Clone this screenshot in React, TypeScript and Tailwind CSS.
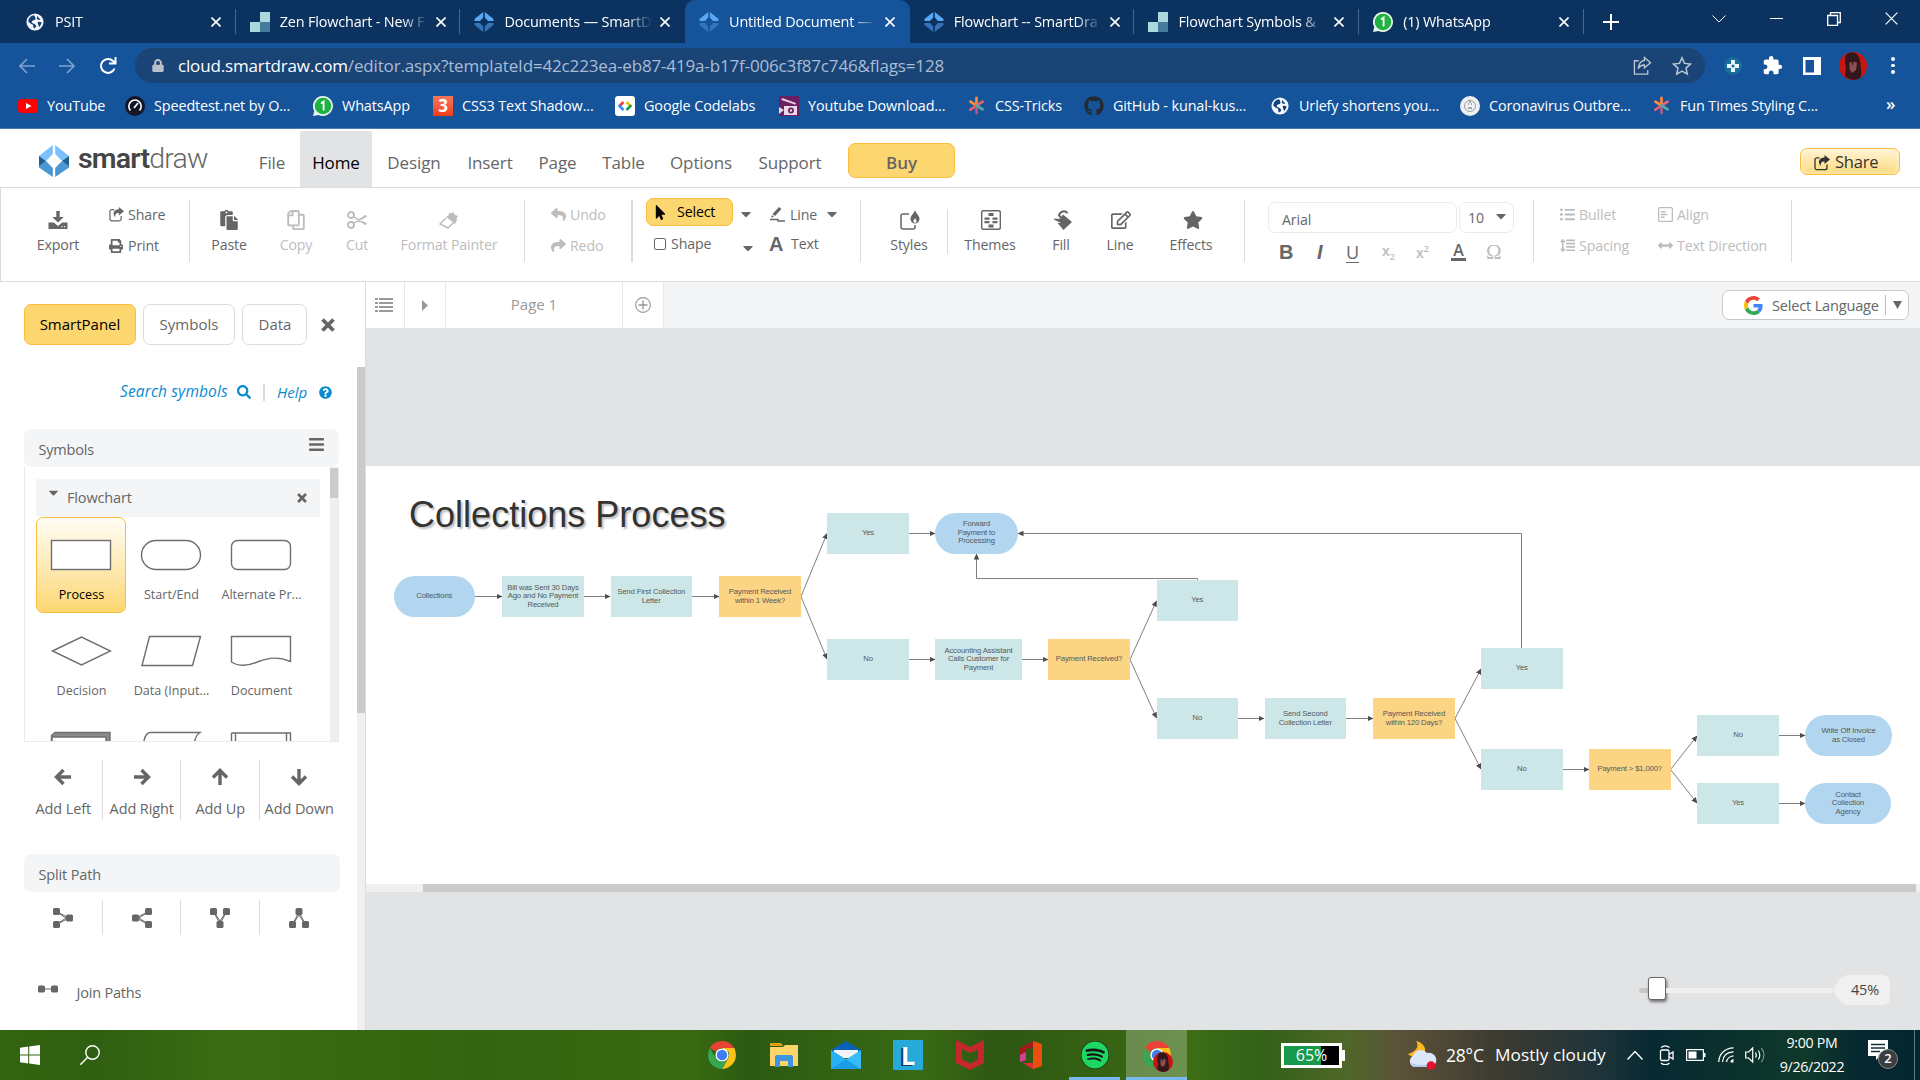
import type { ReactNode } from 'react';
import {
  FaBars, FaCaretDown, FaCut, FaGithub, FaLock, FaPaste, FaPrint, FaQuestionCircle, FaRegCopy,
  FaRegEdit, FaReply, FaSearch, FaShare, FaSpotify, FaStar, FaListUl, FaArrowsAltH, FaMousePointer,
} from 'react-icons/fa';
import { MdExtension } from 'react-icons/md';

/* ---------- favicons ---------- */

const Globe = ({ className = 'size-[18px]' }: { className?: string }) => (
  <svg viewBox="0 0 20 20" className={className}>
    <circle cx="10" cy="10" r="9.5" fill="#f5f7fa" />
    <path d="M9 2.5C5 3 2.6 6 2.6 9.6l3.2 2.600c1.700.4 2.400 1 2.200 2.400l.6 2.500c2-.4 3-1.600 2.600-3.200-1-1.700-3.600-2.200-4.800-3.400 0-1.700 1.200-2.400 3.400-2.600 1.600-1.400.6-3.200-.8-5.400zM12.500 3l-.4 3.400c1 1.400 2.600 1.200 3.900 1.400M13 10.200c1.200-.7 3-.5 4.300.2-.2 2-1.200 3.800-2.700 5.100-.5-1.700-1.400-3-1.600-5.300z" fill="#12427c" />
  </svg>
);
const Zen = () => (
  <svg viewBox="0 0 20 20" className="size-5">
    <path d="M10 0h10v10H10z" fill="#a9d8dd" /><path d="M0 10h10v10H0z" fill="#a9d8dd" /><path d="M10 10h10v10H10z" fill="#457b9d" />
  </svg>
);
const Gem = () => (
  <svg viewBox="0 0 20 20" className="size-5">
    <path d="M9.200 0v5.500L6 9H.5V7zM10.800 0v5.500L14 9h5.500V7z" fill="#58a8f5" />
    <path d="M9.200 20v-5.500L6 11H.5v2zM10.800 20v-5.500L14 11h5.500v2z" fill="#3573b8" />
  </svg>
);
const WhatsApp = () => (
  <svg viewBox="0 0 20 20" className="size-5">
    <path d="M10 0a10 10 0 1 1-4.600 18.900L0 20l1.300-5A10 10 0 0 1 10 0z" fill="#e8f6ec" />
    <circle cx="10" cy="10" r="8.300" fill="#1fb141" />
    <path d="M8 7.400 10.600 5.500v9" fill="none" stroke="#fff" strokeWidth="1.800" />
  </svg>
);
const Asterisk = () => (
  <svg viewBox="0 0 20 20" className="size-[19px]" strokeWidth="2.800" strokeLinecap="round">
    <path d="M10 10V2M10 10 3.500 6" stroke="#ff8a3c" /><path d="m10 10 6.500-4M10 10l-6.500 4.500" stroke="#f0616d" />
    <path d="M10 10v8" stroke="#b45a8c" /><path d="m10 10 6.500 4" stroke="#5aa7a0" />
  </svg>
);
const YouTube = () => (
  <svg viewBox="0 0 20 20" className="size-5"><rect y="3" width="20" height="14" rx="3.500" fill="#f00" /><path d="m8 7 5.500 3L8 13z" fill="#fff" /></svg>
);
const Speedtest = () => (
  <svg viewBox="0 0 20 20" className="size-5">
    <circle cx="10" cy="10" r="10" fill="#141526" />
    <path d="M5.500 14.500a6.200 6.200 0 1 1 9 0" fill="none" stroke="#fff" strokeWidth="1.600" /><path d="m9 12 4-5" stroke="#fff" strokeWidth="1.800" />
  </svg>
);
const Css3 = () => (
  <span className="flex size-5 items-center justify-center bg-gradient-to-b from-[#f4775c] to-[#f23a12] text-[17px] leading-none font-bold text-white">3</span>
);
const Codelabs = () => (
  <svg viewBox="0 0 20 20" className="size-5">
    <rect width="20" height="20" rx="3" fill="#fff" />
    <g fill="none" strokeWidth="2.600"><path d="M8.500 6 4.500 10" stroke="#ea4335" /><path d="m3.600 9.100 4.900 4.900" stroke="#4285f4" /><path d="m11.500 6 4 4" stroke="#fbbc04" /><path d="m16.400 9.100-4.900 4.900" stroke="#0f9d58" /></g>
  </svg>
);
const Downloader = () => (
  <svg viewBox="0 0 20 20" className="size-5">
    <path d="M0 0h20v20H0z" fill="#6b1f63" /><path d="m3 2 14 5-.6 1.800L2.400 4z" fill="#e3cfe2" /><path d="M5 10h13v9H5z" fill="#ead9e9" /><path d="M0 11l5 3-5 4z" fill="#ead9e9" /><circle cx="12" cy="14.500" r="3" fill="#6b1f63" /><circle cx="12" cy="14.500" r="1.200" fill="#ead9e9" />
  </svg>
);
const Corona = () => (
  <svg viewBox="0 0 20 20" className="size-5"><circle cx="10" cy="10" r="10" fill="#eef0f2" /><circle cx="10" cy="10" r="5.500" fill="none" stroke="#9a9fa5" /><path d="M8 8h1M11 8h1M8 12h4M10 5v2" stroke="#8a8f96" strokeWidth="1.300" /></svg>
);
const Avatar = ({ className }: { className: string }) => (
  <svg viewBox="0 0 28 28" className={className}>
    <circle cx="14" cy="14" r="14" fill="#c9150f" />
    <path d="M8 2c5-3 10-1 12 3 2 4 1 8 2 12 0 3 1 6-1 9-5 3-11 2-15-2 0-3 1-5 1-8C6 11 5 6 8 2z" fill="#33171c" />
    <path d="M10 11c2-2 6-2 8 0l-1 7-4 3-3-4z" fill="#8a4f50" /><path d="m12 8 1.500 6L15 8zM8 12l2.500 7V10z" fill="#33171c" />
  </svg>
);

/* ---------- browser chrome ---------- */

const tabs = [
  { icon: <Globe />, title: 'PSIT' },
  { icon: <Zen />, title: 'Zen Flowchart - New F' },
  { icon: <Gem />, title: 'Documents — SmartD' },
  { icon: <Gem />, title: 'Untitled Document —', active: true },
  { icon: <Gem />, title: 'Flowchart -- SmartDra' },
  { icon: <Zen />, title: 'Flowchart Symbols &' },
  { icon: <WhatsApp />, title: '(1) WhatsApp' },
];

const Cross = ({ className }: { className: string }) => (
  <svg viewBox="0 0 10 10" className={className} stroke="currentColor"><path d="m.5.5 9 9M9.500.5l-9 9" /></svg>
);

function TabStrip() {
  return (
    <div className="flex h-[43px] bg-[#0c335f] pl-[11px] text-white">
      {tabs.map((t, i) => (
        <div
          key={i}
          className={
            t.active
              ? 'relative flex w-[224.700px] items-center rounded-t-[10px] bg-[#15539a] pl-[14px]'
              : 'relative flex w-[224.700px] items-center pl-[14px]'
          }
        >
          <span className="flex w-5 shrink-0 justify-center">{t.icon}</span>
          <span className="ml-[10px] w-[151px] text-[14.4px] tracking-[-0.15px] whitespace-nowrap [mask-image:linear-gradient(90deg,#000_122px,transparent_148px)]">
            {t.title}
          </span>
          <Cross className="ml-[5px] size-[10px] stroke-[1.6]" />
          {i !== 2 && i !== 3 && <span className="absolute right-0 h-[25px] w-px bg-[#48678b]" />}
        </div>
      ))}
      <div className="flex flex-1 items-center">
        <svg viewBox="0 0 16 16" className="ml-[19px] size-4 stroke-white stroke-2"><path d="M8 0v16M0 8h16" /></svg>
        <svg viewBox="0 0 14 8" className="mb-[6px] ml-[93px] h-2 w-[14px] fill-none stroke-white"><path d="m.5.5 6.500 6.500L13.500.5" /></svg>
        <span className="mb-[6px] ml-[44px] h-px w-[13px] bg-white" />
        <svg viewBox="0 0 14 14" className="mb-[6px] ml-[44px] size-[14px] fill-none stroke-white stroke-[1.3]"><path d="M.7 3.500h9.800v9.800H.7zM3.500 3.500V.7h9.800v9.800h-2.800" /></svg>
        <Cross className="mb-[6px] ml-[44px] size-[13px] stroke-[0.9]" />
      </div>
    </div>
  );
}

function AddressBar() {
  return (
    <div className="flex h-[45px] items-center text-white">
      <svg viewBox="0 0 16 16" className="ml-[19px] size-4 fill-none stroke-[#7fa2cc] stroke-[1.6]"><path d="M16 8H1M8 1 1 8l7 7" /></svg>
      <svg viewBox="0 0 16 16" className="ml-6 size-4 fill-none stroke-[#7fa2cc] stroke-[1.6]"><path d="M0 8h15M8 1l7 7-7 7" /></svg>
      <svg viewBox="0 0 18 18" className="ml-6 size-[18px] fill-none stroke-white stroke-2"><path d="M15.500 11.500A7 7 0 1 1 14 4l2 2M16.500 0v6.500H10" /></svg>
      <div className="ml-[18px] flex h-[35px] w-[1570px] items-center rounded-full bg-[#1a4475]">
        <FaLock className="ml-[15px] h-[13px] text-[#b9c0c9]" />
        <span className="ml-[12px] w-[1437px] text-[17px] tracking-[-0.155px] whitespace-nowrap text-[#a9bdd6]">
          <span className="text-white">cloud.smartdraw.com</span>/editor.aspx?templateId=42c223ea-eb87-419a-b17f-006c3f87c746&amp;flags=128
        </span>
        <svg viewBox="0 0 20 20" className="ml-[18px] size-[19px] fill-none stroke-[#bcc7d4] stroke-[1.4]"><path d="M6 5H1.500v14h14v-4M12 1.500l6.500 5.500-6.500 5.500V9.500c-3 0-5 1-6.500 4C6 8.500 8 5 12 4.700z" /></svg>
        <svg viewBox="0 0 20 20" className="ml-[20px] size-5 fill-none stroke-[#bcc7d4] stroke-[1.5]"><path d="m10 1.800 2.500 5.600 6 .6-4.500 4.100 1.300 6L10 15l-5.300 3.100 1.300-6L1.500 8l6-.6z" /></svg>
      </div>
      <svg viewBox="0 0 18 18" className="ml-[19px] size-[18px]"><circle cx="9" cy="9" r="9" fill="#186f97" /><path d="M7 3h4v4h4v4h-4v4H7v-4H3V7h4z" fill="#e7f6fb" /><circle cx="9" cy="9" r="1.500" fill="#186f97" /></svg>
      <MdExtension className="ml-[20px] size-[21px]" />
      <svg viewBox="0 0 18 18" className="ml-[20px] size-[18px]"><path d="M0 0h18v18H0zM2.500 3v12.500H11V3z" fill="#fff" fillRule="evenodd" /></svg>
      <Avatar className="ml-[18px] size-7" />
      <span className="ml-6 flex flex-col gap-[3px]">
        <i className="size-[3.500px] rounded-full bg-white" /><i className="size-[3.500px] rounded-full bg-white" /><i className="size-[3.500px] rounded-full bg-white" />
      </span>
    </div>
  );
}

const bookmarks: { icon: ReactNode; label: string; w: string }[] = [
  { icon: <YouTube />, label: 'YouTube', w: 'w-[107px]' },
  { icon: <Speedtest />, label: 'Speedtest.net by O...', w: 'w-[188px]' },
  { icon: <WhatsApp />, label: 'WhatsApp', w: 'w-[120px]' },
  { icon: <Css3 />, label: 'CSS3 Text Shadow...', w: 'w-[182px]' },
  { icon: <Codelabs />, label: 'Google Codelabs', w: 'w-[164px]' },
  { icon: <Downloader />, label: 'Youtube Download...', w: 'w-[187px]' },
  { icon: <Asterisk />, label: 'CSS-Tricks', w: 'w-[118px]' },
  { icon: <FaGithub className="size-5 text-[#24292f]" />, label: 'GitHub - kunal-kus...', w: 'w-[186px]' },
  { icon: <Globe />, label: 'Urlefy shortens you...', w: 'w-[190px]' },
  { icon: <Corona />, label: 'Coronavirus Outbre...', w: 'w-[191px]' },
  { icon: <Asterisk />, label: 'Fun Times Styling C...', w: 'w-[235px]' },
];

function Bookmarks() {
  return (
    <div className="flex h-[41px] items-center border-b border-[#4a7db8] pb-[4px] pl-[18px] text-white">
      {bookmarks.map((b) => (
        <div key={b.label} className={`flex shrink-0 items-center ${b.w}`}>
          <span className="flex w-5 justify-center">{b.icon}</span>
          <span className="ml-[9px] text-[14.4px] tracking-[-0.12px] whitespace-nowrap">{b.label}</span>
        </div>
      ))}
      <span className="pb-1 text-[17px] font-semibold">»</span>
    </div>
  );
}

/* ---------- application header ---------- */

function Logo() {
  return (
    <div className="flex w-[206px] items-center">
      <svg viewBox="0 0 30 32" className="mt-[5px] ml-[1px] h-8 w-[30px] shrink-0">
        <path d="M13.800 0v9L7 16 0 11z" fill="#7cc1fb" /><path d="M16.200 0v9l6.800 7 7-5z" fill="#7cc1fb" />
        <path d="M0 11v11l7-6z" fill="#1b6290" /><path d="M30 11v11l-7-6z" fill="#1b6290" />
        <path d="M0 21v1.500L13.800 32v-9L7 16z" fill="#4a97d2" /><path d="M30 21v1.500L16.200 32v-9l6.800-7z" fill="#4a97d2" />
      </svg>
      <span className="mt-[2px] ml-[9px] font-['Roboto'] text-[28.5px] leading-none tracking-[-0.8px] text-[#454545]">
        <b className="font-semibold">smart</b><span className="font-light text-[#666]">draw</span>
      </span>
    </div>
  );
}

const menu = [
  { label: 'File', w: 'w-[56px]' }, { label: 'Home', w: 'w-[72px]' }, { label: 'Design', w: 'w-[84px]' },
  { label: 'Insert', w: 'w-[68px]' }, { label: 'Page', w: 'w-[67px]' }, { label: 'Table', w: 'w-[65px]' },
  { label: 'Options', w: 'w-[90px]' }, { label: 'Support', w: 'w-[88px]' },
];

const ShareIcon = ({ className }: { className: string }) => (
  <svg viewBox="0 0 16 16" className={className}>
    <path d="M13 9.500v3.200a2 2 0 0 1-2 2H3a2 2 0 0 1-2-2V4.800a2 2 0 0 1 2-2h2.500" fill="none" stroke="currentColor" strokeWidth="1.300" />
    <path d="M10.500 0 16 4.500 10.500 9V6.500C7 6.500 6.500 8 6.800 11 3.500 7.500 4.500 2.800 10.500 2.500z" fill="currentColor" />
  </svg>
);

function MenuBar() {
  return (
    <div className="flex h-[58px] border-b border-[#dcdcdd] bg-white pl-[38px] text-[17px] text-[#666]">
      <Logo />
      <div className="flex items-end pt-px">
        {menu.map((m) => (
          <div
            key={m.label}
            className={`flex h-14 items-center justify-center tracking-[-0.1px] ${m.w} ${m.label === 'Home' ? 'bg-[#e2e3e5] text-black' : ''}`}
          >
            <span className="pt-[7px]">{m.label}</span>
          </div>
        ))}
      </div>
      <div className="mt-[13px] ml-[14px] flex h-[35px] w-[107px] items-center justify-center rounded-[7px] border border-[#fdbc3c] bg-[#fcd66e] pt-1 text-[17px] font-semibold">Buy</div>
      <div className="mt-[18px] mr-5 ml-auto flex h-[27px] w-[100px] items-center rounded-[7px] border border-[#fdbc3c] bg-gradient-to-b from-[#fff3d4] to-[#fcda7c] pt-[2px] pl-[13px] text-[#333] shadow-[inset_0_0_4px_#fff8e0]">
        <ShareIcon className="mr-[5px] size-4" />
        <span className="text-[16.5px] tracking-[-0.2px]">Share</span>
      </div>
    </div>
  );
}

/* ---------- ribbon ---------- */

function Tool({ icon, label, w, off }: { icon: ReactNode; label: string; w: string; off?: boolean }) {
  return (
    <div className={`flex flex-col items-center pt-[10px] ${w} ${off ? 'text-[#bdbdbd]' : ''}`}>
      <span className="flex h-5 items-center">{icon}</span>
      <span className="mt-[4px] leading-[22px] whitespace-nowrap">{label}</span>
    </div>
  );
}

function Small({ icon, label }: { icon: ReactNode; label: string }) {
  return (
    <div className="flex h-[31px] items-center pb-[2px] whitespace-nowrap">
      <span className="flex w-[19px] items-center">{icon}</span>
      {label}
    </div>
  );
}

const Divider = () => <span className="h-[62px] w-px shrink-0 bg-[#dcdcdd]" />;

function Ribbon() {
  return (
    <div className="flex h-[94px] items-start border-b border-l border-[#dcdcdd] bg-white pt-3 text-[14.2px] tracking-[-0.15px] text-[#666]">
      <div className="flex w-[188px] pl-[29px]">
        <Tool w="w-14" label="Export" icon={
          <svg viewBox="0 0 20 20" className="size-5 fill-current"><path d="M8.300 1h3.400v6h4L10 12.500 4.300 7h4z" /><path d="M.5 12.500h5.300L10 16l4.200-3.500h5.300V19H.5zM13.500 16v1.200h1.200V16zm2.600 0v1.200h1.200V16z" fillRule="evenodd" /></svg>} />
        <div className="ml-[23px]">
          <Small label="Share" icon={<ShareIcon className="size-[15px]" />} />
          <Small label="Print" icon={<FaPrint className="size-[14px]" />} />
        </div>
      </div>
      <Divider />
      <div className="flex w-[334px] pl-[6px]">
        <Tool w="w-[66px]" label="Paste" icon={<FaPaste className="size-5" />} />
        <Tool w="w-[68px]" off label="Copy" icon={<FaRegCopy className="size-5 -scale-x-100" />} />
        <Tool w="w-[54px]" off label="Cut" icon={
          <svg viewBox="0 0 20 20" className="size-5 fill-none stroke-current"><circle cx="4" cy="5" r="3" strokeWidth="1.900" /><circle cx="4" cy="15" r="3" strokeWidth="1.900" /><path d="m6.500 6.800 12 7.700 1-1L8 7.500M6.500 13.200l12-7.700 1 1L8 12.500" strokeWidth="1.100" /></svg>} />
        <Tool w="w-[130px]" off label="Format Painter" icon={
          <svg viewBox="0 0 20 20" className="size-5"><path d="m7 8-6 6 8 4 6-6" fill="none" stroke="currentColor" strokeWidth="1.500" /><path d="M7 7c2-1 3-2 3-4 2 1 3 0 4-1l2 3 3 1c-1 2-2 2-1 4l-2 4z" fill="currentColor" /></svg>} />
      </div>
      <Divider />
      <div className="w-[106px] pl-[26px] text-[#bdbdbd]">
        <Small label="Undo" icon={<FaReply className="size-[15px]" />} />
        <Small label="Redo" icon={<FaShare className="size-[15px]" />} />
      </div>
      <span className="h-[62px] w-[2px] shrink-0 bg-[#dcdcdd]" />
      <div className="w-[227px] pl-[13px]">
        <div className="-mt-[2px] flex h-7 items-center">
          <span className="flex h-7 w-[87px] items-center rounded-[7px] border border-[#fdbc3c] bg-[#fcd66e] pl-[6px] text-black">
            <FaMousePointer className="mr-[9px] size-[15px]" />Select
          </span>
          <FaCaretDown className="mt-1 ml-[5px] size-[16px]" />
          <svg viewBox="0 0 16 16" className="mt-1 ml-[16px] size-4"><path d="M2.500 8 9 1l2.500 2L5 10zM2 9l2 2-3 .5z" fill="currentColor" /><path d="M0 13.500h8V15h7" fill="none" stroke="currentColor" strokeWidth="1.400" /></svg>
          <span className="mt-[5px] ml-[4px] w-[34px]">Line</span>
          <FaCaretDown className="mt-1 size-[16px]" />
        </div>
        <div className="mt-1 flex h-7 items-center">
          <span className="ml-2 size-3 rounded-[2px] border-[1.500px] border-[#666]" />
          <span className="ml-[5px] w-[69px]">Shape</span>
          <FaCaretDown className="mt-[7px] size-[16px]" />
          <span className="ml-[13px] w-[22px] font-['Liberation_Sans'] text-[20px] leading-none font-bold">A</span>
          Text
        </div>
      </div>
      <Divider />
      <div className="flex w-[383px] pl-[10px]">
        <Tool w="w-[76px]" label="Styles" icon={
          <svg viewBox="0 0 20 20" className="ml-[2px] size-5"><path d="M9 4H3a2 2 0 0 0-2 2v11a2 2 0 0 0 2 2h10a2 2 0 0 0 2-2v-2" fill="none" stroke="currentColor" strokeWidth="1.500" /><path d="M15 0c1 3.500 4.500 5.500 4.500 9a4.500 4.500 0 0 1-9 0c0-3.500 3.500-5.500 4.500-9zm0 8c-.5 1.500-1.600 2-1.600 3.200a1.600 1.600 0 0 0 3.200 0C16.600 10 15.500 9.500 15 8z" fill="currentColor" fillRule="evenodd" /></svg>} />
        <span className="mt-[9px] h-[45px] w-px bg-[#dcdcdd]" />
        <Tool w="w-[84px]" label="Themes" icon={
          <svg viewBox="0 0 20 20" className="ml-[2px] size-5"><rect x=".7" y=".7" width="18.600" height="18.600" rx="1.500" fill="none" stroke="currentColor" strokeWidth="1.400" /><path d="M7.500 3h5v3h-5zM3.500 7.500h5v2.300h-5zM11.500 7.500h5v2.300h-5zM3.500 11h5v2.300h-5zM11.500 11h5v2.300h-5zM7.500 14.500h5v3h-5z" fill="currentColor" /></svg>} />
        <Tool w="w-[58px]" label="Fill" icon={
          <svg viewBox="0 0 20 20" className="ml-[3px] size-5"><path d="M8.500 8 6 5.500C7 1 12 0 14.500 3.200" fill="none" stroke="currentColor" strokeWidth="2" /><path d="M10 4.500 19 12l-8.500 8-6-7H8L1 9.800v-1h6z" fill="currentColor" /></svg>} />
        <Tool w="w-[60px]" label="Line" icon={<FaRegEdit className="ml-[2px] size-5" />} />
        <Tool w="w-[82px]" label="Effects" icon={<FaStar className="ml-[4px] size-5" />} />
      </div>
      <Divider />
      <div className="w-[288px] pl-[23px]">
        <div className="mt-[2px] flex gap-[2px]">
          <span className="flex h-[31px] w-[189px] items-center rounded-[7px] border border-[#ebebec] pt-1 pl-[13px]">Arial</span>
          <span className="flex h-[31px] w-[55px] items-center rounded-[7px] border border-[#ebebec] pl-[8px]">
            <span className="w-[25px] pt-px">10</span><FaCaretDown className="-mt-1 size-[16px]" />
          </span>
        </div>
        <div className="mt-[7px] flex h-6 items-center text-[18px] leading-none tracking-normal">
          <span className="w-[47px] pl-[11px] font-['Liberation_Sans'] text-[20px] font-bold">B</span>
          <span className="w-[30px] pl-[2px] font-['Liberation_Sans'] text-[20px] font-bold italic">I</span>
          <span className="w-[37px] pl-px underline decoration-1 underline-offset-[3px]">U</span>
          <span className="w-[34px] text-[14px] font-semibold text-[#bdbdbd]">x<span className="align-sub text-[9px]">2</span></span>
          <span className="w-[35px] text-[14px] font-semibold text-[#bdbdbd]">x<span className="align-super text-[9px]">2</span></span>
          <span className="mr-[20px] w-[15px] border-b-[3px] border-[#666] text-center text-[16px] leading-[15px] font-semibold">A</span>
          <span className="font-['Liberation_Serif'] text-[21px] text-[#bdbdbd]">Ω</span>
        </div>
      </div>
      <Divider />
      <div className="flex w-[257px] pl-[26px] text-[#bdbdbd]">
        <div className="w-[98px]">
          <Small label="Bullet" icon={<FaListUl className="size-[15px]" />} />
          <Small label="Spacing" icon={
            <svg viewBox="0 0 16 16" className="size-[15px]"><path d="M3 2v12M.8 4.500 3 2l2.200 2.500M.8 11.500 3 14l2.200-2.500" fill="none" stroke="currentColor" strokeWidth="1.600" /><path d="M6.500 2.500H16M6.500 6H16M6.500 9.500H16M6.500 13H16" stroke="currentColor" strokeWidth="1.700" /></svg>} />
        </div>
        <div>
          <Small label="Align" icon={
            <svg viewBox="0 0 16 16" className="size-[15px]"><rect x=".7" y=".7" width="14.600" height="14.600" rx="1" fill="none" stroke="currentColor" strokeWidth="1.300" /><path d="M3 5h5M3 8h7M3 11h4" stroke="currentColor" strokeWidth="1.600" /></svg>} />
          <Small label="Text Direction" icon={<FaArrowsAltH className="size-[15px]" />} />
        </div>
      </div>
      <Divider />
    </div>
  );
}

/* ---------- side panel ---------- */

const BoldCross = ({ className }: { className: string }) => (
  <svg viewBox="0 0 14 14" className={className} stroke="currentColor" strokeWidth="3.800"><path d="m1.500 1.500 11 11M12.500 1.500l-11 11" /></svg>
);

const BoldArrow = ({ className }: { className: string }) => (
  <svg viewBox="0 0 18 18" className={`size-[18px] ${className}`} fill="none" stroke="currentColor" strokeWidth="3.400"><path d="M17 9H4M9.500 2 2.500 9l7 7" /></svg>
);

const Shape = ({ children }: { children: ReactNode }) => (
  <svg viewBox="0 0 62 32" className="h-8 w-[62px] fill-white stroke-[#6e6e6e] stroke-[1.4]">{children}</svg>
);

const symbols: { label: string; shape: ReactNode; on?: boolean }[] = [
  { label: 'Process', on: true, shape: <rect x="1.500" y="1.500" width="59" height="29" /> },
  { label: 'Start/End', shape: <rect x="1.500" y="1.500" width="59" height="29" rx="14.500" /> },
  { label: 'Alternate Pr...', shape: <rect x="1.500" y="1.500" width="59" height="29" rx="6" /> },
  { label: 'Decision', shape: <path d="M2.500 16 31.500 2l29 14-29 14z" /> },
  { label: 'Data (Input...', shape: <path d="M9.500 1.500h51l-8 29H2z" /> },
  { label: 'Document', shape: <path d="M1.500 1.500h59v25c-12-5-21-4-32 0-11 5-20 5-27 .5z" /> },
  { label: '', shape: <><path d="M5 1.500h55v30H1.500V4.500z" fill="#8a8a8a" /><path d="M2 6h54v28H2z" /></> },
  { label: '', shape: <path d="M10 1.500h50c-5 3-6 8-8 29H2C3 12 4 2 10 1.500z" /> },
  { label: '', shape: <path d="M1.500 2h59v32M1.500 2v32M5.500 2v32M56.500 2v32" /> },
];

const adders = [
  { turn: 'rotate-0', label: 'Add Left' }, { turn: 'rotate-180', label: 'Add Right' },
  { turn: 'rotate-90', label: 'Add Up' }, { turn: '-rotate-90', label: 'Add Down' },
];

const splits = ['rotate-0', 'rotate-180', 'rotate-90', '-rotate-90'];

function SidePanel() {
  return (
    <div className="flex h-full w-[366px] shrink-0 border-r border-[#dcdcdd] bg-white text-[#666]">
      <div className="w-[357px] pl-6">
        <div className="mt-[22px] flex h-[41px] items-center text-[15px]">
          <span className="flex h-[41px] w-28 items-center justify-center rounded-[7px] border border-[#fdbc3c] bg-[#fcd66e] text-black">SmartPanel</span>
          <span className="ml-[7px] flex h-[41px] w-[92px] items-center justify-center rounded-[7px] border border-[#dcdcdd]">Symbols</span>
          <span className="ml-[7px] flex h-[41px] w-[65px] items-center justify-center rounded-[7px] border border-[#dcdcdd] pl-px">Data</span>
          <BoldCross className="ml-[14px] size-[14px]" />
        </div>
        <div className="mt-[37px] flex h-5 items-center pl-[96px] text-[15.5px] text-[#0a8bd0] italic">
          <span className="w-[117px] tracking-[0.13px] whitespace-nowrap">Search symbols</span>
          <FaSearch className="size-[14px] shrink-0" />
          <span className="ml-3 h-[17px] w-[2px] bg-[#dcdcdd]" />
          <span className="ml-3 w-[42px] text-[15px]">Help</span>
          <FaQuestionCircle className="size-[13px]" />
        </div>
        <div className="mt-[27px] flex h-[38px] w-[315px] items-center justify-between rounded-[7px] bg-[#f4f5f7] pr-[14px] pl-[14.500px] text-[14.5px]">
          <span className="pt-[4px] tracking-[-0.2px]">Symbols</span>
          <FaBars className="-mt-2 size-[17px]" />
        </div>
        <div className="flex h-[275px] w-[315px] justify-between overflow-hidden border border-t-0 border-[#ebebec]">
          <div className="pt-3 pl-[11px]">
            <div className="flex h-[38px] w-[284px] items-center bg-[#f4f5f7] text-[14.5px]">
              <FaCaretDown className="-mt-3 ml-[10px] size-[15px]" />
              <span className="ml-[6px] w-[230px] tracking-[-0.15px]">Flowchart</span>
              <BoldCross className="size-[10px]" />
            </div>
            <div className="grid w-[270px] grid-cols-3 text-[12.6px]">
              {symbols.map((s, i) => (
                <div
                  key={i}
                  className={
                    s.on
                      ? 'flex h-24 flex-col items-center rounded-[7px] border border-[#fdbc3c] bg-gradient-to-b from-[#fffdf6] to-[#fcd66e] pt-[21px] text-black'
                      : 'flex h-24 flex-col items-center pt-[22px]'
                  }
                >
                  <Shape>{s.shape}</Shape>
                  <span className="mt-[15px] pl-px leading-[18px] whitespace-nowrap">{s.label}</span>
                </div>
              ))}
            </div>
          </div>
          <div className="h-full w-2 bg-[#efefef] pt-px"><div className="h-[30px] bg-[#cbcbcb]" /></div>
        </div>
        <div className="mt-[18px] flex h-[60px]">
          {adders.map(({ turn, label }, i) => (
            <div key={label} className={`flex w-[78.500px] flex-col items-center pt-[8px] pl-px ${i < 3 ? 'border-r border-[#dcdcdd]' : ''}`}>
              <BoldArrow className={turn} />
              <span className="mt-[13px] text-[14.5px] leading-5 tracking-[-0.1px] whitespace-nowrap">{label}</span>
            </div>
          ))}
        </div>
        <div className="mt-[34px] flex h-[38px] w-[316px] items-center rounded-[7px] bg-[#f4f5f7] pt-1 pl-[14.500px] text-[14.5px] tracking-[-0.15px]">Split Path</div>
        <div className="mt-2 flex h-[35px]">
          {splits.map((r, i) => (
            <div key={r} className={`flex w-[78.500px] items-center justify-center pl-px ${i < 3 ? 'border-r border-[#dcdcdd]' : ''}`}>
              <svg viewBox="0 0 20 20" className={`size-5 ${r}`}><path d="M3.500 3.500 16 10 3.500 16.500M7 6l6 4-6 4" fill="none" stroke="currentColor" strokeWidth="1" /><rect y="0" width="7" height="7" rx="1.500" fill="currentColor" /><rect y="13" width="7" height="7" rx="1.500" fill="currentColor" /><rect x="13" y="6.500" width="7" height="7" rx="1.500" fill="currentColor" /></svg>
            </div>
          ))}
        </div>
        <div className="mt-[46px] flex h-6 items-center pl-[14px] text-[14.5px] tracking-[-0.2px]">
          <svg viewBox="0 0 20 8" className="-mt-2 mr-[18.500px] h-2 w-5 fill-current"><rect y=".5" width="7" height="7" rx="1.500" /><rect x="13" y=".5" width="7" height="7" rx="1.500" /><path d="M7 3.500h6v1H7z" /></svg>
          Join Paths
        </div>
      </div>
      <div className="flex w-2 flex-col">
        <div className="h-[85px]" />
        <div className="h-[346px] bg-[#cbcbcb]" />
        <div className="flex-1 bg-[#f0f0f0]" />
      </div>
    </div>
  );
}

/* ---------- diagram ---------- */

type Node = { x: number; y: number; w: number; kind: 'teal' | 'gold' | 'blue'; lines: string[] };

const nodes: Node[] = [
  { x: 393.5, y: 576, w: 81.5, kind: 'blue', lines: ['Collections'] },
  { x: 502, y: 576, w: 82, kind: 'teal', lines: ['Bill was Sent 30 Days', 'Ago and No Payment', 'Received'] },
  { x: 610.5, y: 576, w: 81.5, kind: 'teal', lines: ['Send First Collection', 'Letter'] },
  { x: 719, y: 576, w: 82, kind: 'gold', lines: ['Payment Received', 'within 1 Week?'] },
  { x: 827, y: 512.5, w: 82, kind: 'teal', lines: ['Yes'] },
  { x: 935, y: 512.5, w: 83, kind: 'blue', lines: ['Forward', 'Payment to', 'Processing'] },
  { x: 827, y: 639, w: 82, kind: 'teal', lines: ['No'] },
  { x: 935, y: 639, w: 87, kind: 'teal', lines: ['Accounting Assistant', 'Calls Customer for', 'Payment'] },
  { x: 1048, y: 639, w: 82, kind: 'gold', lines: ['Payment Received?'] },
  { x: 1156.5, y: 580, w: 81.5, kind: 'teal', lines: ['Yes'] },
  { x: 1156.5, y: 698, w: 81.5, kind: 'teal', lines: ['No'] },
  { x: 1264.5, y: 698, w: 81.5, kind: 'teal', lines: ['Send Second', 'Collection Letter'] },
  { x: 1373, y: 698, w: 82, kind: 'gold', lines: ['Payment Received', 'within 120 Days?'] },
  { x: 1481, y: 648, w: 81.5, kind: 'teal', lines: ['Yes'] },
  { x: 1481, y: 749, w: 81.5, kind: 'teal', lines: ['No'] },
  { x: 1589, y: 749, w: 81.5, kind: 'gold', lines: ['Payment > $1,000?'] },
  { x: 1697, y: 715, w: 82, kind: 'teal', lines: ['No'] },
  { x: 1805, y: 715, w: 87, kind: 'blue', lines: ['Write Off Invoice', 'as Closed'] },
  { x: 1697, y: 783, w: 82, kind: 'teal', lines: ['Yes'] },
  { x: 1805, y: 783, w: 86, kind: 'blue', lines: ['Contact', 'Collection', 'Agency'] },
];

const fills = {
  teal: 'bg-[#cde7e8]',
  gold: 'bg-[#fbd484]',
  blue: 'bg-[#b2d6ef] rounded-[21px]',
};

const connectors = [
  'M475 596.500H502', 'M584 596.500H610', 'M692 596.500H719',
  'M801 596.500 827 533.500', 'M801 596.500 827 659',
  'M909 533.500H935', 'M909 659.500H935', 'M1022 659.500H1048',
  'M1130 659.500 1156.500 601', 'M1130 659.500 1156.500 718',
  'M1238 718.500H1264', 'M1346 718.500H1373',
  'M1455 718.500 1481 669', 'M1455 718.500 1481 769',
  'M1562.500 769.500H1589', 'M1670.500 769.500 1697 736', 'M1670.500 769.500 1697 803',
  'M1779 735.500H1805', 'M1779 803.500H1805',
  'M1521.500 648V533.500H1018', 'M1197.500 580V578.500H976.500V554',
];

/* Diagram coordinates are window coordinates; the page begins at (366, 466). */
const ORIGIN_X = 366;
const ORIGIN_Y = 466;

function Diagram() {
  return (
    <div className="relative h-[418px] overflow-hidden bg-white font-['Liberation_Sans']">
      <h1 className="absolute top-[28px] left-[43px] text-[36px] leading-[42px] tracking-[0.02px] whitespace-nowrap text-[#333] [text-shadow:2px_2px_2px_rgba(0,0,0,0.25)]">
        Collections Process
      </h1>
      <svg viewBox="366 466 1554 418" className="absolute inset-0 h-[418px] w-[1554px]" fill="none" stroke="#808080" strokeWidth="1">
        <defs>
          <marker id="head" viewBox="0 0 6 6" refX="5.500" refY="3" markerWidth="6" markerHeight="6" markerUnits="userSpaceOnUse" orient="auto">
            <path d="M0 .2 6 3 0 5.800z" fill="#4d4d4d" stroke="none" />
          </marker>
        </defs>
        {connectors.map((d) => <path key={d} d={d} markerEnd="url(#head)" />)}
      </svg>
      {nodes.map((n, i) => (
        <div
          key={i}
          className={`absolute flex h-[41px] flex-col items-center justify-center text-[7.700px] leading-[8.500px] tracking-[-0.14px] whitespace-nowrap text-[#55585a] ${fills[n.kind]}`}
          style={{ left: n.x - ORIGIN_X, top: n.y - ORIGIN_Y, width: n.w }}
        >
          {n.lines.map((l) => <span key={l}>{l}</span>)}
        </div>
      ))}
    </div>
  );
}

const GoogleG = () => (
  <svg viewBox="0 0 48 48" className="size-[19px]">
    <path fill="#EA4335" d="M24 9.500c3.540 0 6.710 1.220 9.210 3.600l6.850-6.850C35.900 2.380 30.470 0 24 0 14.620 0 6.510 5.380 2.560 13.220l7.980 6.190C12.430 13.720 17.740 9.500 24 9.500z" />
    <path fill="#4285F4" d="M46.980 24.550c0-1.570-.15-3.090-.38-4.550H24v9.020h12.940c-.58 2.960-2.260 5.480-4.780 7.180l7.730 6c4.510-4.180 7.090-10.360 7.090-17.650z" />
    <path fill="#FBBC05" d="M10.530 28.590c-.48-1.450-.76-2.990-.76-4.590s.27-3.140.76-4.590l-7.980-6.190C.92 16.460 0 20.120 0 24c0 3.880.92 7.540 2.560 10.780l7.970-6.190z" />
    <path fill="#34A853" d="M24 48c6.480 0 11.930-2.130 15.890-5.810l-7.730-6c-2.150 1.450-4.920 2.300-8.160 2.300-6.260 0-11.570-4.220-13.470-9.910l-7.980 6.190C6.510 42.620 14.620 48 24 48z" />
  </svg>
);

function Workspace() {
  return (
    <div className="flex flex-1 flex-col bg-[#e2e3e5]">
      <div className="flex h-[46px] items-center bg-[#f4f5f7] text-[#999]">
        <span className="flex h-full w-[39px] items-center border-r border-[#e8e8e9] bg-white pl-[9px]">
          <svg viewBox="0 0 18 14" className="h-[14px] w-[18px] fill-current"><path d="M0 0h3v2H0zM4 0h14v2H4zM0 4h3v2H0zM4 4h14v2H4zM0 8h3v2H0zM4 8h14v2H4zM0 12h3v2H0zM4 12h14v2H4z" /></svg>
        </span>
        <span className="flex h-full w-[41px] items-center justify-center border-r border-[#e8e8e9] bg-white">
          <svg viewBox="0 0 6 11" className="h-[11px] w-[6px] fill-current"><path d="m0 0 6 5.500L0 11z" /></svg>
        </span>
        <span className="flex h-full w-[177px] items-center justify-center border-r border-[#e8e8e9] bg-white pb-[2px] text-[15px]">Page 1</span>
        <span className="flex h-full w-[41px] items-center justify-center border-r border-[#e8e8e9] bg-white pr-px pb-px">
          <svg viewBox="0 0 16 16" className="size-4 fill-none stroke-current"><circle cx="8" cy="8" r="7.400" strokeWidth="1.100" /><path d="M8 3.500v9M3.500 8h9" strokeWidth="1.400" /></svg>
        </span>
        <span className="mr-[11px] ml-auto flex h-[30px] w-[187px] items-center rounded-[7px] border border-[#c6c8ca] bg-white pl-[21px] text-[14.6px] text-[#666]">
          <GoogleG />
          <span className="ml-[9px] w-[113px] pt-px tracking-[-0.2px] whitespace-nowrap">Select Language</span>
          <span className="h-5 w-px bg-[#bbb]" />
          <svg viewBox="0 0 9 8" className="ml-[7px] h-2 w-[9px] fill-current"><path d="M0 0h9L4.500 8z" /></svg>
        </span>
      </div>
      <div className="h-[138px]" />
      <Diagram />
      <div className="h-2 bg-[#f0f0f0] pr-1 pl-[57px]"><div className="h-full bg-[#cbcbcb]" /></div>
      <div className="mt-[83px] mr-[30px] ml-auto flex h-[30px] items-center">
        <span className="h-[5px] w-[11px] rounded-l-full bg-[#c8c8c9]" />
        <span className="mb-[3px] -ml-[2px] h-[23px] w-[18px] rounded-[3px] border-[1.500px] border-[#666] bg-white shadow-[1px_2px_3px_rgba(0,0,0,0.5)]" />
        <span className="h-[5px] w-[166px] bg-[#f0f0f0]" />
        <svg viewBox="0 0 10 30" className="h-[30px] w-[10px] fill-[#f0f0f0]"><path d="M10.500 1v28L0 15z" /></svg>
        <span className="-ml-px flex h-[30px] w-[49px] items-center rounded-[7px] bg-[#f0f0f0] pl-[10px] text-[14.5px] tracking-[-0.2px] text-[#444]">45%</span>
      </div>
    </div>
  );
}

/* ---------- taskbar ---------- */

const Chrome = () => (
  <svg viewBox="0 0 28 28" className="size-7">
    <path d="M14 0c5.300 0 9.700 2.700 12.100 7H14a7 7 0 0 0-6.100 3.500L1.900 7A14 14 0 0 1 14 0z" fill="#ea4335" />
    <path d="M26.100 7A14 14 0 0 1 14 28l6-10.500A7 7 0 0 0 18 8z" fill="#fbc116" /><path d="M14 7h12.100l1 3H18z" fill="#fbc116" />
    <path d="M1.900 7a14 14 0 0 0 12.100 21l6-10.500c-3 5-10 4.700-12.200 0z" fill="#34a853" />
    <circle cx="14" cy="14" r="6.600" fill="#fff" /><circle cx="14" cy="14" r="5.200" fill="#3c7df0" />
  </svg>
);

function Taskbar() {
  return (
    <div className="flex h-[50px] items-center bg-[linear-gradient(90deg,#33640f_0%,#2f5f10_5%,#3a6d13_12%,#33640f_25%,#3a6a12_36%,#2c5a12_39%,#396a14_48%,#2d5713_52%,#3d6d14_62%,#33611a_66%,#4e6728_70%,#5c5138_73%,#3c3b31_78%,#22343a_83%,#072a33_86%,#0b322d_91%,#10392b_94%,#052831_97%,#03262f_100%)] text-white">
      <svg viewBox="0 0 20 20" className="ml-5 size-5 fill-white"><path d="M0 2.800 8.200 1.600v7.900H0zM9.200 1.500 20 0v9.500H9.200zM0 10.500h8.200v7.900L0 17.200zM9.200 10.500H20V20L9.200 18.500z" /></svg>
      <svg viewBox="0 0 20 20" className="ml-10 size-5 fill-none stroke-white stroke-[1.4]"><circle cx="12.500" cy="7.500" r="6.700" /><path d="M7.700 12.300.3 19.700" /></svg>
      <span className="ml-[608px]"><Chrome /></span>
      <svg viewBox="0 0 28 24" className="ml-[34px] h-6 w-7"><path d="M0 0h11l2 3H0z" fill="#e0a212" /><path d="M0 4h13l2-2h13v21H0z" fill="#fdd46a" /><path d="M5 24V14a2 2 0 0 1 2-2h14a2 2 0 0 1 2 2v10h-5v-6h-8v6z" fill="#3d96df" /></svg>
      <svg viewBox="0 0 30 28" className="ml-[33px] h-7 w-[30px]"><path d="M0 9 15 0l15 9v5H0z" fill="#0a62b8" /><path d="M3 9h24v8H3z" fill="#f4f4f6" /><path d="M0 9 30 28H0z" fill="#1e9be9" /><path d="M30 9v19H0z" fill="#37bdf5" /><path d="M0 9l15 9.500L0 28z" fill="#28b2f2" /><path d="m15 18.500 15 9.500H0z" fill="#1c9be6" /></svg>
      <span className="ml-8 flex h-[30px] w-[30px] items-center justify-center bg-[#25aad9] text-[25px] leading-none font-bold [text-shadow:-2px_1px_0_#123a6b]">L</span>
      <svg viewBox="0 0 28 30" className="ml-[33px] h-[30px] w-7"><path d="m0 0 14 7 14-7v23l-14 7-14-7zm6 9v10.500l8 4 8-4V9l-8 4z" fill="#c4282d" fillRule="evenodd" /></svg>
      <svg viewBox="0 0 24 28" className="ml-[35px] h-7 w-6"><path d="M1 7 14 0v6L7 9v10l-6 2z" fill="#a31a1e" /><path d="m1 14 6-3v8l-6 2z" fill="#d0409a" /><path d="m14 0 9 3v22l-9 3z" fill="#eb4e10" /><path d="M4 22h10v6z" fill="#e02b36" /></svg>
      <span className="ml-[26px] flex h-[50px] w-[51px] flex-col items-center border-b-[3px] border-[#76b9ed] pt-[11px]">
        <FaSpotify className="size-[28px] rounded-full bg-[#181818] text-[#1ed760]" />
      </span>
      <span className="relative ml-[6px] flex h-[50px] w-[61px] justify-center border-b-[3px] border-[#76b9ed] bg-white/25 pt-[11px]">
        <Chrome />
        <Avatar className="absolute top-[22px] left-[27px] size-5" />
      </span>
      <span className="ml-[94px] flex h-[25px] w-[61px] items-center justify-center border-[3px] border-white bg-[linear-gradient(90deg,#179a4b_68%,#000_68%)] text-[16px]">65%</span>
      <span className="h-[11px] w-[3px] bg-white" />
      <svg viewBox="0 0 30 30" className="ml-[62px] size-[30px]"><path d="M9 1c3 4 2 10-8 13 4 5 15 4 17-3C19 6 14 2 9 1z" fill="#fbb81f" /><path d="M7 27a6 6 0 0 1-1-11 8 8 0 0 1 14-3 7 7 0 0 1 4 14z" fill="#dce8f9" /><path d="M7 27a5 5 0 0 1-3-4c7 3 16 3 23-2 1 4-2 6-4 6z" fill="#b4cbef" /><circle cx="24" cy="25.500" r="4.300" fill="#e3132f" /></svg>
      <span className="ml-[9px] w-[49px] text-[17.5px] tracking-[-0.2px] whitespace-nowrap">28°C</span>
      <span className="w-[132px] text-[17.2px] tracking-[0.05px] whitespace-nowrap">Mostly cloudy</span>
      <svg viewBox="0 0 16 9" className="h-[9px] w-4 shrink-0 fill-none stroke-white stroke-[1.4]"><path d="m.5 8.500 7.500-8 7.500 8" /></svg>
      <svg viewBox="0 0 16 20" className="ml-4 h-5 w-4 shrink-0 fill-none stroke-white stroke-[1.3]"><rect x="1.500" y="5" width="8.500" height="10.500" rx="1.500" /><path d="m10 9.500 4-2.500v7l-4-2.500M2 2.500C4.500.5 8 .5 10.500 2.500M2 18c2.500 2 6 2 8.500 0" /></svg>
      <svg viewBox="0 0 20 12" className="ml-[11px] h-3 w-5 shrink-0"><rect x=".6" y=".6" width="16.800" height="10.800" fill="none" stroke="#fff" strokeWidth="1.200" /><path d="M2.500 2.500h8v7h-8zM18 4h1.500v4H18z" fill="#fff" /></svg>
      <svg viewBox="0 0 16 16" className="ml-[12px] size-4 shrink-0 fill-none stroke-white stroke-[1.2]"><path d="M.7 15C1 7 7 1 15.500.8M4.500 15C5 9 9 5 15.500 4.800M8.500 15c.5-3 3-6 7-6.200" /><path d="M12.500 15.500a3.500 3.500 0 0 1 3-3.500v3.500z" fill="#fff" stroke="none" /></svg>
      <svg viewBox="0 0 20 18" className="ml-[11px] h-[18px] w-5 shrink-0 fill-none stroke-white stroke-[1.2]"><path d="M.7 6h3l4-4v14l-4-4h-3zM10.500 6.500c1 1.500 1 3.500 0 5M13.300 4.500c2 2.500 2 6.500 0 9" /><path d="M16.300 2c3.500 4 3.500 10 0 14" stroke="#7c8d90" /></svg>
      <span className="ml-[10px] flex w-[74px] flex-col text-center text-[14.2px] leading-6 tracking-[-0.3px] whitespace-nowrap"><span>9:00 PM</span><span>9/26/2022</span></span>
      <span className="relative ml-[19px] h-[30px] w-8 shrink-0">
        <svg viewBox="0 0 20 20" className="size-5"><path d="M0 0h20v16h-8l-4 4v-4H0z" fill="#fff" /><path d="M3 4.500h14M3 8h14M3 11.500h9" stroke="#10303a" strokeWidth="1.300" /></svg>
        <span className="absolute top-[9px] left-[10px] flex size-5 items-center justify-center rounded-full border border-[#85898b] bg-[#3a3e41] text-[13px] font-semibold">2</span>
      </span>
      <span className="ml-auto h-full w-[6px] shrink-0 border-l border-[#5d7a80]" />
    </div>
  );
}

export default function App() {
  return (
    <div className="flex h-[1080px] w-[1920px] flex-col overflow-hidden bg-white font-['Open_Sans','Noto_Sans',sans-serif]">
      <div className="bg-[#15539a]">
        <TabStrip />
        <AddressBar />
        <Bookmarks />
      </div>
      <div className="h-px bg-white" />
      <MenuBar />
      <Ribbon />
      <div className="flex min-h-0 flex-1">
        <SidePanel />
        <Workspace />
      </div>
      <Taskbar />
    </div>
  );
}
